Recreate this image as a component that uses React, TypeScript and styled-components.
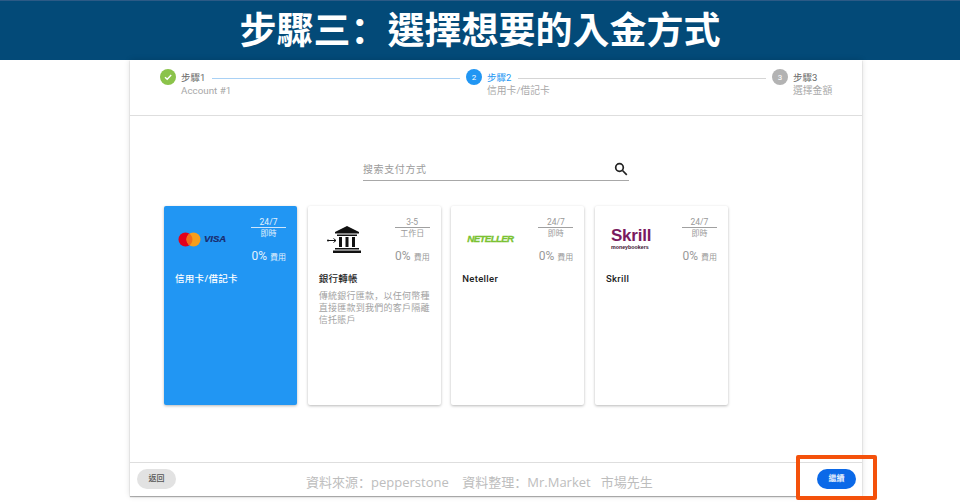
import React from "react";
import styled, { createGlobalStyle } from "styled-components";

const cjk = `Roboto, "Noto Sans CJK TC", sans-serif`;

const Global = createGlobalStyle`
  html, body { margin: 0; padding: 0; background: #fff; }
  body { font-family: ${cjk}; }
`;

const Page = styled.div`
  position: relative;
  width: 960px;
  height: 502px;
  overflow: hidden;
  background: #fff;
`;
const Banner = styled.header`
  height: 60px;
  box-sizing: border-box;
  background: #034a78;
  border-top: 1px solid #2c5a86;
  display: flex;
  align-items: center;
  justify-content: center;
  color: #fff;
  font: 700 37px/1 "Noto Sans CJK TC", sans-serif;
  padding-bottom: 5px;
`;
const Punct = styled.span`
  font-family: "Noto Sans CJK SC", sans-serif;
`;
const Panel = styled.main`
  margin-left: 130px;
  width: 732px;
  height: 436px;
  background: #fff;
  display: flex;
  flex-direction: column;
  box-shadow: 0 1px 1px rgba(0, 0, 0, 0.3), 0 0 6px rgba(0, 0, 0, 0.14);
`;
const Stepper = styled.nav`
  height: 56px;
  flex: none;
  box-sizing: border-box;
  border-bottom: 1px solid #dedede;
  padding: 9px 30px 0;
  display: flex;
  align-items: flex-start;
`;
const Step = styled.div`
  display: flex;
  gap: 5px;
  flex: none;
`;
const Dot = styled.span<{ $bg: string }>`
  width: 16px;
  height: 16px;
  border-radius: 50%;
  background: ${(p) => p.$bg};
  color: #fff;
  font-size: 8px;
  display: flex;
  align-items: center;
  justify-content: center;
`;
const StepText = styled.div<{ $fit?: boolean }>`
  display: flex;
  flex-direction: column;
  gap: 1px;
  padding-top: 3px;
  width: ${(p) => (p.$fit ? "39px" : "25px")};
`;
const StepTitle = styled.span<{ $active?: boolean }>`
  font-size: 9.5px;
  line-height: 12px;
  color: ${(p) => (p.$active ? "#2196f3" : "#666")};
`;
const StepSub = styled.span`
  font-size: 9.8px;
  line-height: 12px;
  color: #a8a8a8;
  white-space: nowrap;
`;
const Connector = styled.span<{ $color: string }>`
  flex: 1;
  height: 1px;
  margin: 9px 6px 0;
  background: ${(p) => p.$color};
`;
const Content = styled.section`
  flex: 1;
  display: flex;
  flex-direction: column;
  align-items: center;
  padding-top: 44px;
`;
const Search = styled.div`
  width: 266px;
  height: 21px;
  box-sizing: border-box;
  border-bottom: 1px solid #a8a8a8;
  display: flex;
  align-items: center;
  justify-content: space-between;
  padding: 0 1px 3px 0;
  color: #9b9b9b;
  font-size: 10px;
  letter-spacing: 0.6px;
`;
const Cards = styled.div`
  margin-top: 25px;
  align-self: flex-start;
  margin-left: 34px;
  display: grid;
  grid-template-columns: repeat(4, 133px);
  gap: 10.67px;
`;
const Card = styled.article<{ $selected?: boolean }>`
  height: 199px;
  box-sizing: border-box;
  border-radius: 2px;
  padding: 11px 11px 0;
  background: ${(p) => (p.$selected ? "#2196f3" : "#fff")};
  color: ${(p) => (p.$selected ? "#fff" : "#222")};
  box-shadow: 0 1px 3px rgba(0, 0, 0, 0.28);
`;
const CardTop = styled.div`
  display: flex;
  justify-content: space-between;
  height: 56px;
`;
const LogoBox = styled.div<{ $inset: number }>`
  height: 46px;
  margin-top: -1px;
  padding-left: ${(p) => p.$inset}px;
  display: flex;
  align-items: center;
  justify-content: flex-start;
`;
const Meta = styled.div`
  width: 35px;
  display: flex;
  flex-direction: column;
  align-items: stretch;
  text-align: center;
`;
const Hours = styled.div<{ $selected?: boolean }>`
  font-size: 8.5px;
  line-height: 10px;
  color: ${(p) => (p.$selected ? "#e3f2fd" : "#999")};
  border-bottom: 1px solid ${(p) => (p.$selected ? "#cfe6fb" : "#a0a0a0")};
`;
const Unit = styled.div<{ $selected?: boolean }>`
  font-size: 8px;
  line-height: 12px;
  color: ${(p) => (p.$selected ? "#e3f2fd" : "#999")};
`;
const Fee = styled.div<{ $selected?: boolean }>`
  margin-top: 9px;
  margin-left: -12px;
  white-space: nowrap;
  text-align: right;
  font-size: 8px;
  line-height: 14px;
  color: ${(p) => (p.$selected ? "#e3f2fd" : "#999")};
  b {
    font-size: 12px;
    font-weight: 400;
    margin-right: 3px;
  }
`;
const CardName = styled.h3`
  margin: 0;
  font-size: 9.5px;
  line-height: 12px;
  font-weight: 500;
  letter-spacing: 0.3px;
`;
const CardText = styled.p`
  margin: 5px -2px 0 0;
  font-size: 9px;
  line-height: 12px;
  color: #a3a3a3;
  letter-spacing: 0.25px;
`;
const Footer = styled.footer`
  height: 34px;
  flex: none;
  box-sizing: border-box;
  border-top: 1px solid #dedede;
  padding: 6px 6px 0 7px;
  display: flex;
  justify-content: space-between;
  align-items: flex-start;
`;
const PillButton = styled.button<{ $primary?: boolean }>`
  width: 39px;
  height: 20px;
  padding: 0;
  border: 0;
  border-radius: 10px;
  font: 500 8px/20px ${cjk};
  color: ${(p) => (p.$primary ? "#fff" : "#555")};
  background: ${(p) => (p.$primary ? "#0b69e8" : "#e2e2e2")};
`;
const Caption = styled.div`
  position: absolute;
  left: 306px;
  top: 473px;
  font: 400 13px/18px "Open Sans", "Noto Sans CJK TC", sans-serif;
  color: #bdbdbd;
  white-space: pre;
`;
const Highlight = styled.div`
  position: absolute;
  left: 796px;
  top: 455px;
  width: 81px;
  height: 45px;
  box-sizing: border-box;
  border: 4px solid #f4510b;
  border-radius: 2px;
`;
const Neteller = styled.span`
  font: italic 900 9.8px/1 "Liberation Sans", sans-serif;
  color: #7ac231;
  letter-spacing: -0.7px;
  -webkit-text-stroke: 0.3px #7ac231;
`;
const SkrillLogo = styled.div`
  display: flex;
  flex-direction: column;
  color: #7a1a5e;
  font: 700 17px/16px "Liberation Sans", sans-serif;
  letter-spacing: -0.2px;
  small {
    font-size: 5.3px;
    line-height: 6px;
    font-weight: 700;
    color: #3a1030;
    letter-spacing: 0;
  }
`;
const VisaText = styled.span`
  font: italic 700 9.5px/1 "Liberation Sans", sans-serif;
  color: #1a2a6c;
  margin-left: 3px;
  -webkit-text-stroke: 0.2px #1a2a6c;
`;

const Check = () => (
  <svg width="10" height="10" viewBox="0 0 10 10" fill="none">
    <path d="M2 5.2 4.2 7.3 8.2 3" stroke="#fff" strokeWidth="1.4" />
  </svg>
);
const Mastercard = () => (
  <svg width="23" height="15" viewBox="0 0 23 15">
    <circle cx="7.5" cy="7.5" r="7" fill="#e3001b" />
    <circle cx="15.5" cy="7.5" r="7" fill="#f79e1b" />
    <path d="M11.5 1.8a7 7 0 0 1 0 11.4 7 7 0 0 1 0-11.4z" fill="#f26a1b" />
  </svg>
);
const Bank = () => (
  <svg width="34" height="27" viewBox="0 0 34 27">
    <path d="M20 0 32 6v1.500H8V6z" fill="#111" />
    <rect x="10" y="8.500" width="20" height="1.500" fill="#111" />
    <path d="M12 11h3v10h-3zM18.500 11h3v10h-3zM25 11h3v10h-3z" fill="#111" />
    <rect x="8" y="22" width="24" height="1.500" fill="#111" />
    <rect x="6" y="24.500" width="28" height="2.500" fill="#111" />
    <path d="M1 14.500h8M6.500 12.500l2.500 2-2.500 2" stroke="#111" strokeWidth="1" fill="none" />
    <circle cx="1" cy="14.500" r="1" fill="#111" />
  </svg>
);

type Pay = { logo: React.ReactNode; inset: number; hours: string; unit: string; name: string; text?: React.ReactNode; selected?: boolean };
const pays: Pay[] = [
  {
    logo: (
      <>
        <Mastercard />
        <VisaText>VISA</VisaText>
      </>
    ),
    inset: 3,
    hours: "24/7",
    unit: "即時",
    name: "信用卡/借記卡",
    selected: true,
  },
  {
    logo: <Bank />,
    inset: 8,
    hours: "3-5",
    unit: "工作日",
    name: "銀行轉帳",
    text: (
      <>
        傳統銀行匯款<Punct>{"\uFF0C"}</Punct>以任何幣種直接匯款到我們的客戶隔離信托賬戶
      </>
    ),
  },
  { logo: <Neteller>NETELLER</Neteller>, inset: 5, hours: "24/7", unit: "即時", name: "Neteller" },
  {
    logo: (
      <SkrillLogo>
        Skrill
        <small>moneybookers</small>
      </SkrillLogo>
    ),
    inset: 5,
    hours: "24/7",
    unit: "即時",
    name: "Skrill",
  },
];

export default function App() {
  return (
    <Page>
      <Global />
      <Banner>
        <span>
          步驟三<Punct>{"\uFF1A"}</Punct>選擇想要的入金方式
        </span>
      </Banner>
      <Panel>
        <Stepper>
          <Step>
            <Dot $bg="#8bc34a">
              <Check />
            </Dot>
            <StepText>
              <StepTitle>步驟1</StepTitle>
              <StepSub>Account #1</StepSub>
            </StepText>
          </Step>
          <Connector $color="#a9d1f5" />
          <Step>
            <Dot $bg="#2196f3">2</Dot>
            <StepText>
              <StepTitle $active>步驟2</StepTitle>
              <StepSub>信用卡/借記卡</StepSub>
            </StepText>
          </Step>
          <Connector $color="#d5d5d5" />
          <Step>
            <Dot $bg="#b3b3b3">3</Dot>
            <StepText $fit>
              <StepTitle>步驟3</StepTitle>
              <StepSub>選擇金額</StepSub>
            </StepText>
          </Step>
        </Stepper>
        <Content>
          <Search>
            <span>搜索支付方式</span>
            <svg width="14" height="14" viewBox="0 0 14 14" fill="none" stroke="#222" strokeWidth="1.700">
              <circle cx="5.500" cy="5.500" r="3.800" />
              <path d="M8.500 8.500 12.800 12.800" />
            </svg>
          </Search>
          <Cards>
            {pays.map((p) => (
              <Card key={p.name} $selected={p.selected}>
                <CardTop>
                  <LogoBox $inset={p.inset}>{p.logo}</LogoBox>
                  <Meta>
                    <Hours $selected={p.selected}>{p.hours}</Hours>
                    <Unit $selected={p.selected}>{p.unit}</Unit>
                    <Fee $selected={p.selected}>
                      <b>0%</b>費用
                    </Fee>
                  </Meta>
                </CardTop>
                <CardName>{p.name}</CardName>
                {p.text && <CardText>{p.text}</CardText>}
              </Card>
            ))}
          </Cards>
        </Content>
        <Footer>
          <PillButton>返回</PillButton>
          <PillButton $primary>繼續</PillButton>
        </Footer>
      </Panel>
      <Caption>
        資料來源<Punct>{"\uFF1A"}</Punct>
        {"pepperstone    資料整理"}
        <Punct>{"\uFF1A"}</Punct>
        {"Mr.Market   市場先生"}
      </Caption>
      <Highlight />
    </Page>
  );
}
